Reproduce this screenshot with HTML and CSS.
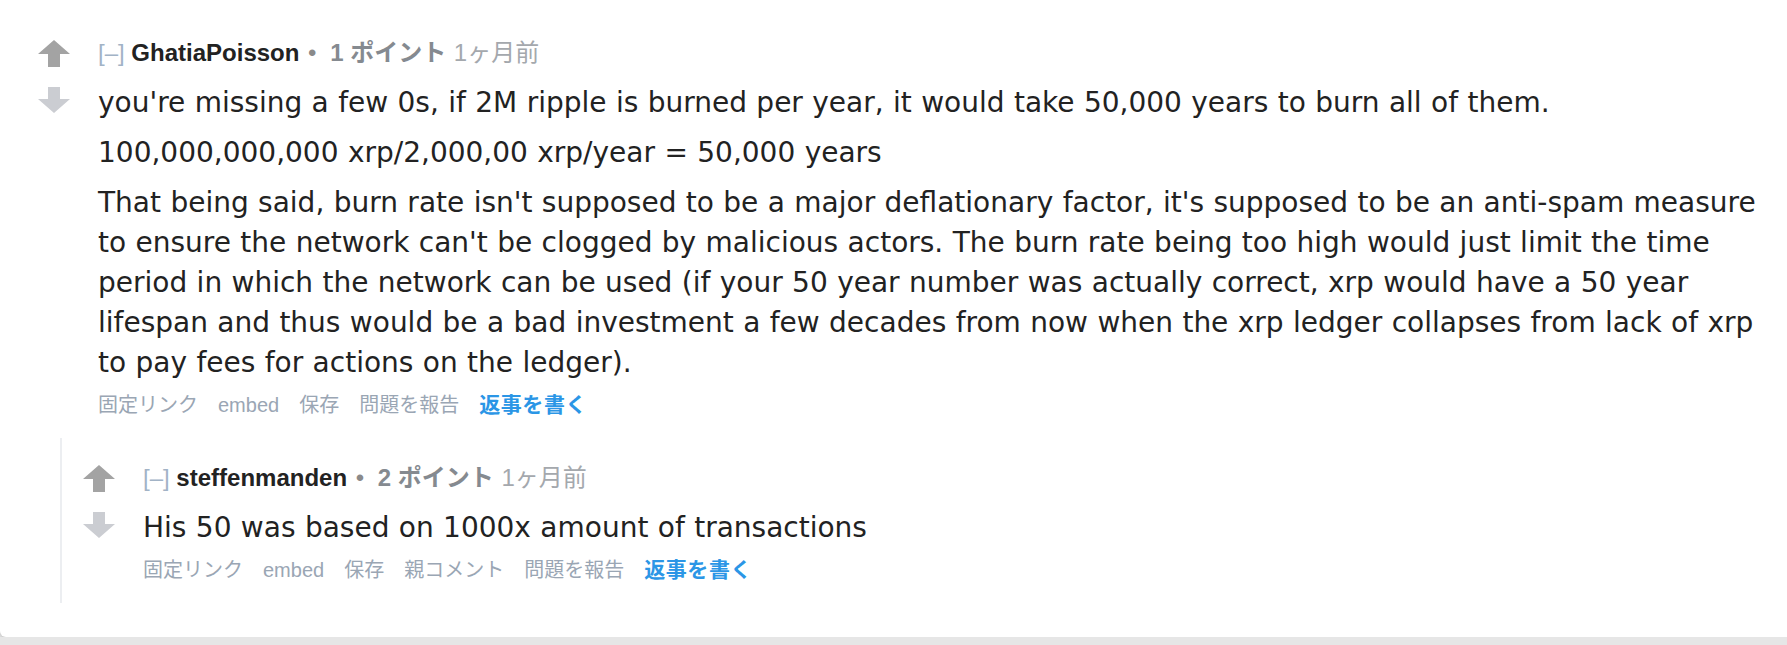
FILE: index.html
```html
<!DOCTYPE html>
<html lang="ja">
<head>
<meta charset="utf-8">
<title>comment</title>
<link rel="stylesheet" href="styles.css">
</head>
<body>
<div class="card">
  <div class="comment">
    <div class="votes">
      <svg class="arrow up" viewBox="0 0 32 27" width="32" height="27"><polygon points="16,0 32,14 22,14 22,27 10,27 10,14 0,14"/></svg>
      <svg class="arrow down" viewBox="0 0 32 26" width="32" height="26"><polygon points="10,0 22,0 22,12 32,12 16,26 0,12 10,12"/></svg>
    </div>
    <div class="entry">
      <p class="tagline"><span class="expand">[–]</span> <span class="author">GhatiaPoisson</span> <span class="dot">•</span> <span class="score">1 ポイント</span> <span class="time">1ヶ月前</span></p>
      <div class="md">
        <p>you're missing a few 0s, if 2M ripple is burned per year, it would take 50,000 years to burn all of them.</p>
        <p>100,000,000,000 xrp/2,000,00 xrp/year = 50,000 years</p>
        <p>That being said, burn rate isn't supposed to be a major deflationary factor, it's supposed to be an anti-spam measure to ensure the network can't be clogged by malicious actors. The burn rate being too high would just limit the time period in which the network can be used (if your 50 year number was actually correct, xrp would have a 50 year lifespan and thus would be a bad investment a few decades from now when the xrp ledger collapses from lack of xrp to pay fees for actions on the ledger).</p>
      </div>
      <ul class="buttons">
        <li>固定リンク</li>
        <li>embed</li>
        <li>保存</li>
        <li>問題を報告</li>
        <li class="reply">返事を書く</li>
      </ul>
    </div>
  </div>
  <div class="children">
    <div class="comment child">
      <div class="votes">
        <svg class="arrow up" viewBox="0 0 32 27" width="32" height="27"><polygon points="16,0 32,14 22,14 22,27 10,27 10,14 0,14"/></svg>
        <svg class="arrow down" viewBox="0 0 32 26" width="32" height="26"><polygon points="10,0 22,0 22,12 32,12 16,26 0,12 10,12"/></svg>
      </div>
      <div class="entry">
        <p class="tagline"><span class="expand">[–]</span> <span class="author">steffenmanden</span> <span class="dot">•</span> <span class="score">2 ポイント</span> <span class="time">1ヶ月前</span></p>
        <div class="md">
          <p>His 50 was based on 1000x amount of transactions</p>
        </div>
        <ul class="buttons">
          <li>固定リンク</li>
          <li>embed</li>
          <li>保存</li>
          <li>親コメント</li>
          <li>問題を報告</li>
          <li class="reply">返事を書く</li>
        </ul>
      </div>
    </div>
  </div>
</div>
</body>
</html>
```
FILE: styles.css
```css
html, body {
  margin: 0;
  padding: 0;
}
body {
  background: #e6e6e6;
  font-family: "DejaVu Sans", "Noto Sans CJK JP", sans-serif;
  color: #222;
  overflow: hidden;
}
.card {
  background: #fff;
  padding: 39px 12px 34px 0;
  border-radius: 0 0 0 6px;
  box-shadow: 0 2px 5px rgba(0, 0, 0, 0.16);
}
.comment {
  display: flex;
  padding-left: 38px;
}
.votes {
  width: 32px;
  flex: 0 0 32px;
  display: flex;
  flex-direction: column;
  padding-top: 1px;
}
.arrow {
  display: block;
}
.arrow.up {
  fill: #a3a3a3;
}
.arrow.down {
  fill: #cbcdd2;
  margin-top: 20px;
}
.entry {
  flex: 1;
  margin-left: 28px;
  min-width: 0;
}
.tagline {
  margin: 0 0 11px;
  font-family: "Liberation Sans", "Noto Sans CJK JP", sans-serif;
  font-size: 24px;
  line-height: 28px;
  color: #888;
  white-space: nowrap;
}
.expand {
  color: #a2b3c6;
}
.author {
  font-weight: bold;
  color: #222;
}
.dot {
  color: #8a8a8a;
  margin-left: 2px;
}
.score {
  font-weight: bold;
  color: #858a90;
  margin-left: 7px;
}
.time {
  color: #a4a8ad;
  margin-left: 1px;
}
.md {
  padding-top: 5px;
  font-size: 28px;
  line-height: 40px;
  word-spacing: 0.5px;
  color: #222;
}
.md p {
  margin: 0 0 10px;
}
.buttons {
  list-style: none;
  margin: 2px 0 0;
  padding: 0;
  display: flex;
  align-items: baseline;
  gap: 20px;
  font-family: "Liberation Sans", "Noto Sans CJK JP", sans-serif;
  font-size: 20px;
  line-height: 24px;
  color: #9aa6b4;
}
.buttons .reply {
  color: #2b96e6;
  font-weight: bold;
  font-size: 21px;
  letter-spacing: 0.6px;
}
.children {
  margin: 21px 0 0 60px;
  border-left: 2px solid #eceef1;
}
.comment.child {
  padding: 26px 0 21px 21px;
}
```
